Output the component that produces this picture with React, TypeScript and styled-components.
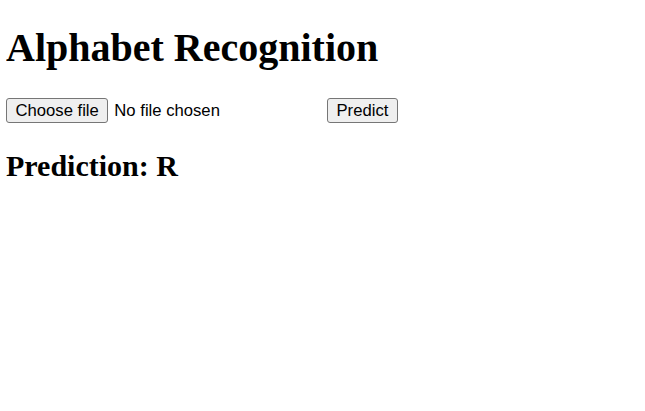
import React, { useState } from "react";
import styled, { createGlobalStyle } from "styled-components";

const Global = createGlobalStyle`
  body {
    margin: 0 6px;
    font-family: "Liberation Serif", "Times New Roman", serif;
    background: #fff;
    color: #000;
  }
`;

const Title = styled.h1`
  font-size: 40px;
  font-weight: bold;
  line-height: 46px;
  margin: 25px 0 27px;
`;

const Form = styled.form`
  display: flex;
  align-items: center;
  gap: 4px;
  height: 25px;
`;

const buttonLook = `
  box-sizing: border-box;
  display: inline-flex;
  align-items: center;
  justify-content: center;
  height: 25px;
  padding: 0 8.5px;
  border: 1px solid #767676;
  border-radius: 3px;
  background: #efefef;
  color: #000;
  font-family: "Liberation Sans", Arial, sans-serif;
  font-size: 16.67px;
  line-height: 19px;
  cursor: default;
`;

const Picker = styled.label`
  display: inline-flex;
  align-items: center;
  width: 317px;
  font-family: "Liberation Sans", Arial, sans-serif;
  font-size: 16.67px;
  color: #000;
`;

const PickerButton = styled.span`
  ${buttonLook}
  margin-right: 6px;
`;

const HiddenInput = styled.input`
  display: none;
`;

const Button = styled.button`
  ${buttonLook}
`;

const Result = styled.h2`
  font-size: 30px;
  font-weight: bold;
  line-height: 34px;
  margin: 26px 0 24px;
`;

export default function App() {
  const [name, setName] = useState<string | null>(null);
  return (
    <>
      <Global />
      <Title>Alphabet Recognition</Title>
      <Form onSubmit={(e) => e.preventDefault()}>
        <Picker>
          <HiddenInput
            type="file"
            onChange={(e) => setName(e.target.files?.[0]?.name ?? null)}
          />
          <PickerButton>Choose file</PickerButton>
          <span>{name ?? "No file chosen"}</span>
        </Picker>
        <Button type="submit">Predict</Button>
      </Form>
      <Result>Prediction: R</Result>
    </>
  );
}
